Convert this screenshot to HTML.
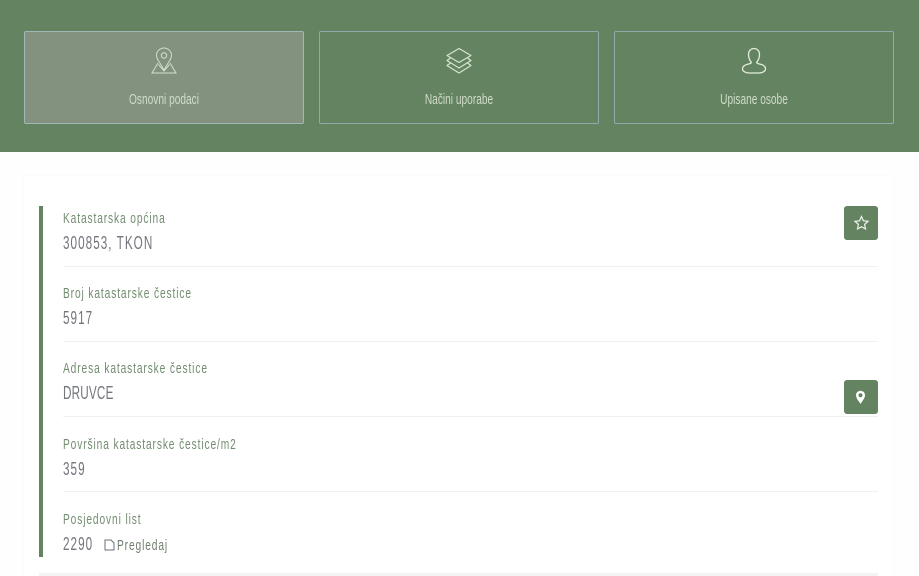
<!DOCTYPE html>
<html><head><meta charset="utf-8"><style>
html,body{margin:0;padding:0;width:919px;height:576px;overflow:hidden;background:#fefefe}
body{position:relative;font-family:"Liberation Sans",sans-serif}
div{position:absolute;box-sizing:border-box}
.hdr{left:0;top:0;width:919px;height:152px;background:#648360}
.tab{top:31px;width:280px;height:93px;border:1px solid #8dabaa;border-radius:2px}
.tab.a{background:#83927e;border-color:#9fb8b4}
.tl{left:0;right:0;top:59px;text-align:center;font-size:14.500px;line-height:18px;color:#cfdcca;font-weight:normal;transform:scaleX(.7)}
.tab svg{position:absolute;left:126px;top:14px}
.card{left:24px;top:176px;width:869px;height:400px;background:#fff;box-shadow:0 0 4px rgba(0,0,0,.03)}
.bar{left:39px;top:206px;width:4px;height:351px;background:#648360}
.lb{left:63px;font-size:15px;line-height:18px;color:#738d70;letter-spacing:1.300px;white-space:nowrap;transform:scaleX(.68);transform-origin:0 0}
.v{left:63px;font-size:18px;line-height:22px;color:#73757d;letter-spacing:1.600px;white-space:nowrap;transform:scaleX(.65);transform-origin:0 0}
.ln{left:63px;width:815px;height:1px;background:#f0f0f0}
.btn{left:844px;width:34px;height:34px;background:#648360;border-radius:3px}
.btn svg{position:absolute;left:9px;top:9px}
</style></head><body>
<div class="hdr"></div>
<div class="tab a" style="left:24px">
<svg width="26" height="28" viewBox="0 0 26 28" fill="none" stroke="#d2dfcd" stroke-width="1"><path d="M13 2a7.500 7.500 0 0 0-7.500 7.500c0 4.500 5 8.500 7.500 15 2.500-6.500 7.500-10.500 7.500-15A7.500 7.500 0 0 0 13 2z"/><circle cx="13" cy="9.500" r="2.700"/><path d="M7 17L1 27h24L19 17M7.500 18.500L13 25 18.500 18.500"/></svg>
<div class="tl">Osnovni podaci</div></div>
<div class="tab" style="left:319px">
<svg width="26" height="28" viewBox="0 0 26 28" fill="none" stroke="#d8e6d2" stroke-width="1.100" stroke-linejoin="round"><path d="M13 2.500L25 9.500 13 16.500 1 9.500z"/><path d="M4.500 12L1 14.500l12 7.500 12-7.500-3.500-2.500"/><path d="M4.500 17L1 19.500l12 7.500 12-7.500-3.500-2.500"/></svg>
<div class="tl">Načini uporabe</div></div>
<div class="tab" style="left:614px">
<svg width="26" height="28" viewBox="0 0 26 28" fill="none" stroke="#e2eddc" stroke-width="1.300"><path d="M13 2.500c-3.300 0-5.500 2.600-5.500 6 0 3 1.200 5.800 2.800 7.800 0 1-1 1.300-3.300 1.800C3 19 1.500 20.500 1.500 22.800c0 2.800 3.500 4.200 7 4.200h9c3.500 0 7-1.400 7-4.200 0-2.300-1.500-3.800-5.500-4.700-2.300-.5-3.300-.8-3.300-1.800 1.600-2 2.800-4.800 2.800-7.800 0-3.400-2.200-6-5.500-6z"/></svg>
<div class="tl">Upisane osobe</div></div>
<div class="card"></div>
<div class="bar"></div>
<div class="lb" style="top:210px">Katastarska općina</div>
<div class="v" style="top:232px">300853, TKON</div>
<div class="ln" style="top:266px"></div>
<div class="lb" style="top:285px">Broj katastarske čestice</div>
<div class="v" style="top:307px">5917</div>
<div class="ln" style="top:341px"></div>
<div class="lb" style="top:360px">Adresa katastarske čestice</div>
<div class="v" style="top:382px;letter-spacing:.3px">DRUVCE</div>
<div class="ln" style="top:416px"></div>
<div class="lb" style="top:436px">Površina katastarske čestice/m2</div>
<div class="v" style="top:458px">359</div>
<div class="ln" style="top:491px"></div>
<div class="lb" style="top:511px">Posjedovni list</div>
<div class="v" style="top:533px">2290</div>
<svg style="position:absolute;left:104px;top:539px" width="11" height="12" viewBox="0 0 11 12" fill="none" stroke="#6d6f78" stroke-width="1" stroke-linejoin="round"><path d="M1 1h6l3 3v7H1z"/></svg>
<div class="lb" style="left:117px;top:537px;color:#6f7d6e">Pregledaj</div>
<div class="btn" style="top:206px"><svg width="16" height="16" viewBox="0 0 16 16" fill="none" stroke="#eef3ec" stroke-width="1.200"><path d="M8.500 1.500l1.900 4.300 4.600.5-3.400 3.100.9 4.600-4-2.300-4 2.300.9-4.600L2 6.300l4.600-.5z"/></svg></div>
<div class="btn" style="top:380px"><svg width="16" height="16" viewBox="0 0 16 16"><path fill-rule="evenodd" fill="#fff" d="M7.500 1.700a4.500 4.500 0 0 0-4.500 4.500c0 3 3 6 4.500 8.800 1.500-2.800 4.500-5.800 4.500-8.800a4.500 4.500 0 0 0-4.500-4.500zm0 2.600a2 2 0 1 1 0 4 2 2 0 0 1 0-4z"/></svg></div>
<div style="left:39px;top:573px;width:839px;height:3px;background:#f3f3f3"></div>
</body></html>
